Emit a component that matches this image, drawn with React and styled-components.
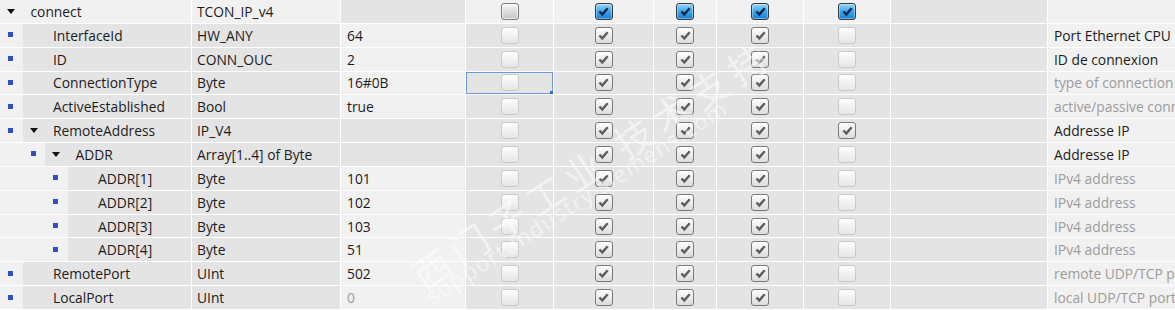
import React from 'react';
import styled, { createGlobalStyle, css } from 'styled-components';

const GlobalStyle = createGlobalStyle`
  html, body {
    margin: 0;
    padding: 0;
    background: #ffffff;
  }
  body {
    font-family: "Open Sans", "Noto Sans", "Noto Sans CJK SC", sans-serif;
    font-size: 13.8px;
    color: #1c1c1c;
  }
`;

const LIGHT = '#f1f1f1';
const DARK = '#e4e4e4';

const Table = styled.div`
  position: relative;
  width: 1175px;
  height: 310px;
  overflow: hidden;
  display: grid;
  grid-template-columns: 191px 148px 124px 87px 99px 62px 86px 86px 156px 1fr;
  grid-auto-rows: 22.85px;
  gap: 1px;
  background: #ffffff;
`;

const Cell = styled.div`
  position: relative;
  display: flex;
  align-items: center;
  min-width: 0;
  overflow: hidden;
  white-space: nowrap;
  background: ${({ $light }) => ($light ? LIGHT : DARK)};
  padding-left: ${({ $pad }) => $pad || 0}px;
  color: ${({ $muted }) => ($muted ? '#9c9c9c' : '#1c1c1c')};
  justify-content: ${({ $center }) => ($center ? 'center' : 'flex-start')};
`;

const TreeCell = styled.div`
  display: flex;
  min-width: 0;
  overflow: hidden;
  white-space: nowrap;
  background: ${DARK};
`;

const Indent = styled.div`
  flex: none;
  position: relative;
  width: ${({ $w }) => $w}px;
  background: ${LIGHT};
`;

const Marker = styled.span`
  position: absolute;
  top: 50%;
  left: ${({ $x }) => $x}px;
  width: 5px;
  height: 5px;
  margin-top: -3px;
  background: #2f4fc4;
`;

const Body = styled.div`
  flex: 1;
  display: flex;
  align-items: center;
  background: ${({ $light }) => ($light ? LIGHT : DARK)};
`;

const Toggle = styled.span`
  flex: none;
  width: 30.5px;
  display: flex;
  align-items: center;
  padding-left: 7px;
  box-sizing: border-box;
  &::before {
    content: '';
    display: ${({ $open }) => ($open ? 'block' : 'none')};
    border-left: 4.5px solid transparent;
    border-right: 4.5px solid transparent;
    border-top: 5px solid #111;
  }
`;

const Box = styled.span`
  display: block;
  width: 18px;
  height: 17px;
  box-sizing: border-box;
  border-radius: 3px;
  position: relative;
  ${({ $kind }) => {
    if ($kind === 'blue')
      return css`
        border: 1px solid #3a3a3a;
        background: linear-gradient(#9ad6f6, #3aa6ea 50%, #1a7fd4);
        box-shadow: inset 0 0 0 1px rgba(255, 255, 255, 0.35);
      `;
    if ($kind === 'empty')
      return css`
        border: 1px solid #7c7c7c;
        background: linear-gradient(#fafafa, #dcdcdc 50%, #c6c6c6);
        box-shadow: inset 0 0 0 1px rgba(255, 255, 255, 0.6);
      `;
    if ($kind === 'grey')
      return css`
        border: 1px solid #7a7a7a;
        background: linear-gradient(#ffffff, #ececec 50%, #dcdcdc);
      `;
    return css`
      border: 1px solid #c9c9c9;
      background: linear-gradient(#ffffff, #f1f1f1 50%, #e6e6e6);
    `;
  }}
`;

const Check = styled.svg`
  position: absolute;
  left: 2.5px;
  top: 2px;
`;

const Selection = styled.span`
  position: absolute;
  inset: 0;
  border: 1px solid #6f98d6;
  pointer-events: none;
  &::after {
    content: '';
    position: absolute;
    right: -2px;
    bottom: -2px;
    width: 4px;
    height: 4px;
    background: #3469d4;
  }
`;

const Watermark = styled.div`
  position: absolute;
  left: ${({ $x }) => $x}px;
  top: ${({ $y }) => $y}px;
  transform: rotate(-33deg);
  transform-origin: left bottom;
  white-space: nowrap;
  color: rgba(255, 255, 255, 0.55);
  font-size: ${({ $size }) => $size}px;
  font-family: ${({ $cjk }) =>
    $cjk ? '"Noto Sans CJK SC", sans-serif' : '"Open Sans", sans-serif'};
  letter-spacing: ${({ $ls }) => $ls || 0}px;
  pointer-events: none;
`;

function CheckBox({ kind, checked }) {
  return (
    <Box $kind={kind}>
      {checked && (
        <Check width="11" height="11" viewBox="0 0 11 11">
          <path
            d="M1.4 5.5 L4.3 8.4 L9.7 2.3"
            fill="none"
            stroke={kind === 'blue' ? '#14254a' : '#5e5e5e'}
            strokeWidth="2.4"
          />
        </Check>
      )}
    </Box>
  );
}

const dataChecks = (last) => [
  ['off', false],
  ['grey', true],
  ['grey', true],
  ['grey', true],
  last ? ['grey', true] : ['off', false],
];

const rows = [
  {
    level: 0, open: true, name: 'connect', type: 'TCON_IP_v4', value: '', head: true,
    checks: [['empty', false], ['blue', true], ['blue', true], ['blue', true], ['blue', true]],
  },
  { level: 1, name: 'InterfaceId', type: 'HW_ANY', value: '64', comment: 'Port Ethernet CPU', dark: true },
  { level: 1, name: 'ID', type: 'CONN_OUC', value: '2', comment: 'ID de connexion', dark: true },
  { level: 1, name: 'ConnectionType', type: 'Byte', value: '16#0B', comment: 'type of connection', selected: true },
  { level: 1, name: 'ActiveEstablished', type: 'Bool', value: 'true', comment: 'active/passive connection establishment' },
  { level: 1, open: true, name: 'RemoteAddress', type: 'IP_V4', value: '', struct: true, comment: 'Addresse IP', dark: true, last: true },
  { level: 2, open: true, name: 'ADDR', type: 'Array[1..4] of Byte', value: '', struct: true, comment: 'Addresse IP', dark: true },
  { level: 3, name: 'ADDR[1]', type: 'Byte', value: '101', comment: 'IPv4 address' },
  { level: 3, name: 'ADDR[2]', type: 'Byte', value: '102', comment: 'IPv4 address' },
  { level: 3, name: 'ADDR[3]', type: 'Byte', value: '103', comment: 'IPv4 address' },
  { level: 3, name: 'ADDR[4]', type: 'Byte', value: '51', comment: 'IPv4 address' },
  { level: 1, name: 'RemotePort', type: 'UInt', value: '502', comment: 'remote UDP/TCP port number' },
  { level: 1, name: 'LocalPort', type: 'UInt', value: '0', valueMuted: true, comment: 'local UDP/TCP port number' },
];

const STEP = 22.5;

function Row({ row }) {
  const checks = row.checks || dataChecks(row.last);
  const indent = row.level * STEP;
  return (
    <>
      <TreeCell>
        {row.level > 0 && (
          <Indent $w={indent}>
            <Marker $x={(row.level - 1) * STEP + 8} />
          </Indent>
        )}
        <Body $light={row.head}>
          <Toggle $open={row.open} />
          {row.name}
        </Body>
      </TreeCell>
      <Cell $light={row.head} $pad={5}>{row.type}</Cell>
      <Cell $light={!row.head && !row.struct} $pad={6} $muted={row.valueMuted}>
        {row.value}
      </Cell>
      {checks.map(([kind, checked], i) => (
        <Cell key={i} $light={row.head} $center>
          <CheckBox kind={kind} checked={checked} />
          {i === 0 && row.selected && <Selection />}
        </Cell>
      ))}
      <Cell />
      <Cell $light $pad={6} $muted={!row.dark}>{row.comment}</Cell>
    </>
  );
}

export default function App() {
  return (
    <>
      <GlobalStyle />
      <Table>
        {rows.map((row) => (
          <Row key={row.name} row={row} />
        ))}
        <Watermark $x={430} $y={246} $size={38} $cjk $ls={7}>
          西门子工业 技术支持
        </Watermark>
        <Watermark $x={436} $y={280} $size={22} $ls={1.5}>
          support.industry.siemens.com
        </Watermark>
      </Table>
    </>
  );
}
